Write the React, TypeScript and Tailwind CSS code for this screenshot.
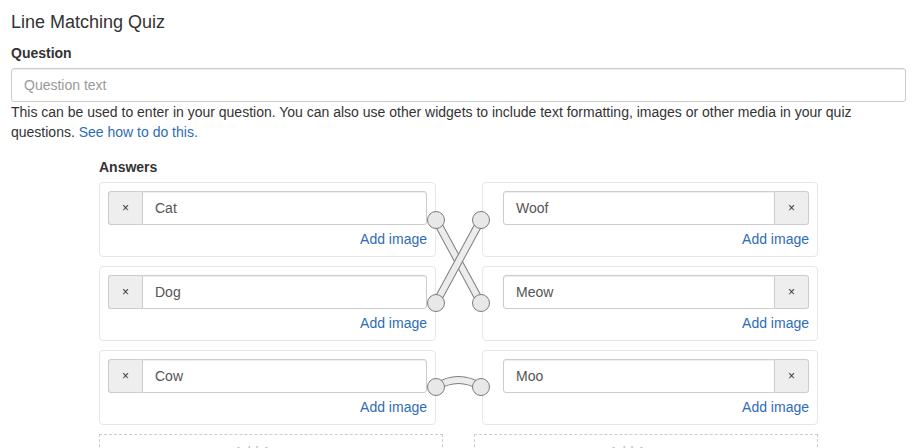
import React from 'react'

interface Pair {
  left: string
  right: string
}

const pairs: Pair[] = [
  { left: 'Cat', right: 'Woof' },
  { left: 'Dog', right: 'Meow' },
  { left: 'Cow', right: 'Moo' },
]

const RemoveButton = ({ side }: { side: 'left' | 'right' }) => (
  <button
    className={`flex h-[34px] w-[34px] shrink-0 items-center justify-center border border-[#ccc] bg-[#eee] text-[12px] text-[#333] ${
      side === 'left' ? 'rounded-l-[3px] border-r-0' : 'rounded-r-[3px] border-l-0'
    }`}
  >
    ×
  </button>
)

const AnswerCard = ({ value, side }: { value: string; side: 'left' | 'right' }) => (
  <div
    className={`rounded-[4px] border border-[#e6e6e6] pt-2 pb-[7px] ${
      side === 'left' ? 'pl-2 pr-2' : 'pl-5 pr-2'
    }`}
  >
    <div className="flex">
      {side === 'left' && <RemoveButton side="left" />}
      <input
        readOnly
        defaultValue={value}
        className={`h-[34px] min-w-0 flex-1 border border-[#ccc] bg-white px-3 text-[#555] shadow-[inset_0_1px_1px_rgba(0,0,0,0.075)] outline-none ${
          side === 'left' ? 'rounded-r-[3px]' : 'rounded-l-[3px]'
        }`}
      />
      {side === 'right' && <RemoveButton side="right" />}
    </div>
    <div className="mt-1 text-right">
      <a href="#" className="text-[#2f6cb6]">
        Add image
      </a>
    </div>
  </div>
)

const Band = ({ d }: { d: string }) => (
  <>
    <path d={d} fill="none" stroke="#7d7d7d" strokeWidth={8} />
    <path d={d} fill="none" stroke="#ececec" strokeWidth={6} />
  </>
)

const Connectors = () => {
  const lx = 337
  const rx = 382
  const ys = [38, 121, 205]
  return (
    <svg
      className="pointer-events-none absolute left-0 top-0"
      width={719}
      height={234}
      viewBox="0 0 719 234"
    >
      <Band d={`M${lx} ${ys[0]} L${rx} ${ys[1]}`} />
      <Band d={`M${rx} ${ys[0]} L${lx} ${ys[1]}`} />
      <Band d={`M${lx} ${ys[2]} Q${(lx + rx) / 2} ${ys[2] - 14} ${rx} ${ys[2]}`} />
      {ys.map((y) => (
        <React.Fragment key={y}>
          <circle cx={lx} cy={y} r={8.5} fill="#e8e8e8" stroke="#7d7d7d" strokeWidth={1} />
          <circle cx={rx} cy={y} r={8.5} fill="#e8e8e8" stroke="#7d7d7d" strokeWidth={1} />
        </React.Fragment>
      ))}
    </svg>
  )
}

export default function App() {
  return (
    <div className="h-[448px] w-[920px] overflow-hidden bg-white pl-[11px] pr-[14px] font-['Liberation_Sans',Arial,sans-serif] text-[14px] leading-5 text-[#333]">
      <h1 className="pt-3 text-[18px] leading-5">Line Matching Quiz</h1>
      <div className="mt-[11px] font-bold">Question</div>
      <input
        placeholder="Question text"
        className="mt-[5px] block h-[34px] w-full rounded-[3px] border border-[#ccc] px-3 text-[#555] shadow-[inset_0_1px_1px_rgba(0,0,0,0.075)] outline-none placeholder:text-[#999]"
      />
      <p>
        This can be used to enter in your question. You can also use other widgets to include text
        formatting, images or other media in your quiz questions.{' '}
        <a href="#" className="text-[#2f6cb6]">
          See how to do this.
        </a>
      </p>

      <div className="mx-auto mt-[15px] w-[719px]">
        <div className="font-bold">Answers</div>
        <div className="relative mt-[5px] grid grid-cols-[337px_336px] gap-x-[46px] gap-y-[9px]">
          {pairs.map((p) => (
            <React.Fragment key={p.left}>
              <AnswerCard value={p.left} side="left" />
              <AnswerCard value={p.right} side="right" />
            </React.Fragment>
          ))}
          <Connectors />
        </div>
        <div className="mt-[9px] flex gap-[31px]">
          <div className="h-[60px] w-[344px] border border-dashed border-[#ccc] pt-[7px] text-center text-[#bbb]">
            Add Answer
          </div>
          <div className="h-[60px] w-[344px] border border-dashed border-[#ccc] pt-[7px] text-center text-[#bbb]">
            Add Answer
          </div>
        </div>
      </div>
    </div>
  )
}
